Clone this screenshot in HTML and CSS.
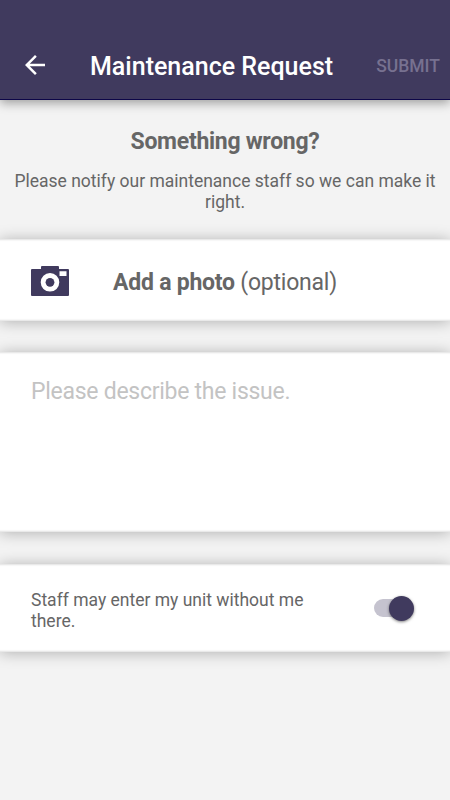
FILE: index.html
```html
<!DOCTYPE html>
<html lang="en">
<head>
<meta charset="utf-8">
<title>Maintenance Request</title>
<link rel="stylesheet" href="styles.css">
</head>
<body>
<header class="bar">
  <svg class="back" viewBox="0 0 24 24"><path d="M20 11H7.83l5.59-5.59L12 4l-8 8 8 8 1.41-1.41L7.83 13H20z"/></svg>
  <h1 class="title">Maintenance Request</h1>
  <span class="submit">SUBMIT</span>
</header>
<main>
  <section class="intro">
    <h2 class="heading">Something wrong?</h2>
    <p class="lead">Please notify our maintenance staff so we can make it right.</p>
  </section>
  <section class="card photo">
    <svg class="camera" viewBox="0 0 38 30"><path fill-rule="evenodd" d="M1 3h9V1q0-1 1-1h16q1 0 1 1v2h9q1 0 1 1v25q0 1-1 1H1q-1 0-1-1V4q0-1 1-1zM19 7a9.3 9.3 0 1 0 0 18.600a9.3 9.3 0 0 0 0-18.600zM28.500 5.300v4.700h7V5.300z"/><circle cx="19" cy="16.300" r="4.400"/></svg>
    <span class="photo-label"><b>Add a photo</b> (optional)</span>
  </section>
  <section class="card issue">Please describe the issue.</section>
  <section class="card access">
    <p class="access-text">Staff may enter my unit without me there.</p>
    <div class="switch"><span class="track"></span><span class="thumb"></span></div>
  </section>
</main>
</body>
</html>
```
FILE: styles.css
```css
* { box-sizing: border-box; margin: 0; padding: 0; }
body { width: 450px; height: 800px; overflow: hidden; background: #f3f3f3; color: #666; font-family: Roboto, sans-serif; }
.bar { height: 100px; padding: 31px 10px 0 20px; display: flex; align-items: center; background: #403a5e; border-bottom: 1px solid #0d0648; box-shadow: 0 3px 10px rgba(0,0,0,.36); color: #fff; }
.back { width: 30px; height: 30px; fill: #fff; }
.title { flex: 1; margin-left: 40px; padding-top: 2px; font-size: 25px; font-weight: 500; white-space: nowrap; }
.submit { padding-top: 1px; font-size: 17.5px; font-weight: 500; color: #777190; }
.intro { height: 139px; padding-top: 28px; text-align: center; }
.heading { font-size: 23px; letter-spacing: -.28px; line-height: 28px; font-weight: 700; }
.lead { margin-top: 15px; font-size: 17.5px; line-height: 20.5px; }
.card { background: #fff; box-shadow: 0 1px 14px rgba(0,0,0,.28), inset 0 3px 2px -2px rgba(0,0,0,.12), inset 0 -3px 2px -2px rgba(0,0,0,.12); }
.photo { height: 82px; padding-left: 31px; display: flex; align-items: center; }
.camera { width: 38px; height: 30px; margin-top: 2px; fill: #403a5e; }
.photo-label { margin-left: 44px; padding-top: 4px; font-size: 23px; letter-spacing: -.23px; }
.issue { height: 180px; margin-top: 31px; padding: 26px 31px; font-size: 23px; letter-spacing: -.27px; line-height: 28px; color: #c3c3c3; }
.access { height: 88px; margin-top: 32px; padding: 0 36px 0 31px; display: flex; align-items: center; justify-content: space-between; }
.access-text { width: 290px; padding-top: 5px; font-size: 17.5px; line-height: 21px; }
.switch { display: flex; align-items: center; }
.track { width: 27px; height: 18px; border-radius: 9px; background: #c5c3cf; }
.thumb { width: 25px; height: 25px; margin-left: -12px; border-radius: 50%; background: #403a5e; box-shadow: 0 1px 3px rgba(0,0,0,.5); }
```
